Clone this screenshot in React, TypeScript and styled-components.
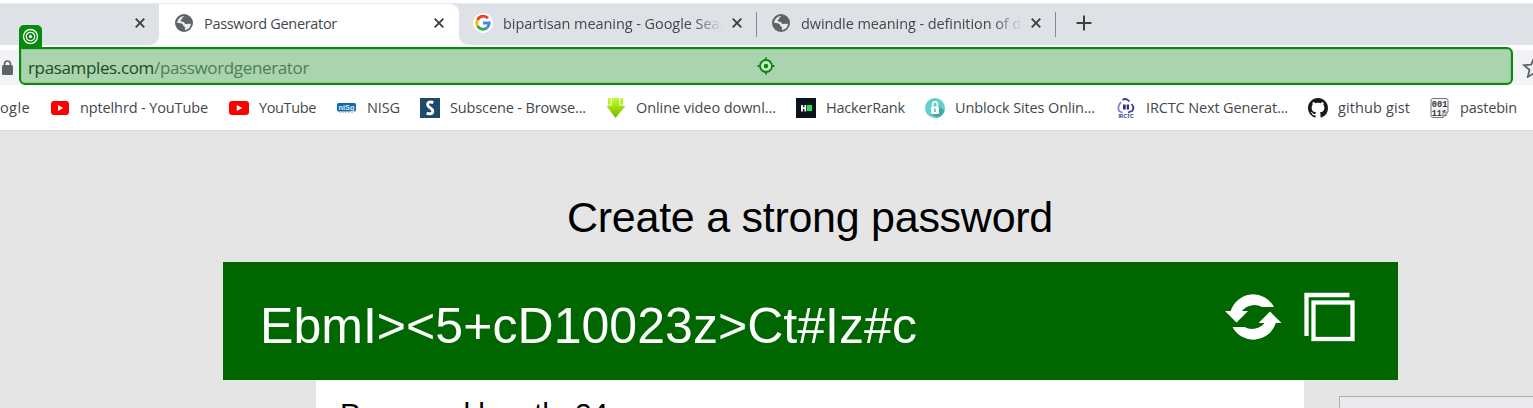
import React, { useLayoutEffect, useRef } from 'react';
import styled, { createGlobalStyle } from 'styled-components';

const Global = createGlobalStyle`
  * { box-sizing: border-box; }
  body { margin: 0; overflow: hidden; background: #e5e5e5; }
`;
const Screen = styled.div`
  width: 1533px; height: 408px; overflow: hidden; display: flex; flex-direction: column;
  background: #fff; font-family: "Open Sans", "Noto Sans", sans-serif; color: #44474b;
`;
const TabStrip = styled.div`
  height: 42px; margin-top: 3px; flex: none; display: flex; background: #dee1e6; border-top: 1px solid #e6e8ec;
`;
const PrevTab = styled.div`
  width: 159px; padding: 12px 14px 0 0; display: flex; justify-content: flex-end; align-items: flex-start;
  background: #dee1e6; border-bottom-right-radius: 9px;
`;
const TabBacking = styled.div`display: flex; background: #fff; border-radius: 0 9px 0 0; width: 459px;`;
const ActiveTab = styled.div`
  flex: 1; display: flex; padding: 10px 14px 0 16px; background: #fff; border-radius: 9px 9px 0 0;
`;
const RestTabs = styled.div`flex: 1; background: #fff; display: flex;`;
const RestInner = styled.div`flex: 1; background: #dee1e6; border-bottom-left-radius: 9px; padding: 10px 0 0 14px; display: flex;`;
const IconBox = styled.span<{ $w: number; $gap?: number; $top?: number }>`
  width: ${p => p.$w}px; margin-right: ${p => p.$gap ?? 0}px; margin-top: ${p => p.$top ?? 0}px;
  flex: none; display: flex; align-self: flex-start;
  svg { display: block; overflow: visible; }
`;
const LabelBox = styled.span<{ $w: number; $size: number; $clip?: number; $color?: string }>`
  display: block; flex: none; width: ${p => p.$clip ?? p.$w}px; white-space: pre; overflow: ${p => (p.$clip ? 'hidden' : 'visible')};
  font-size: ${p => p.$size}px; line-height: 20px; color: ${p => p.$color ?? 'inherit'};
  ${p => p.$clip ? 'mask-image: linear-gradient(to right, #000 calc(100% - 28px), transparent);' : ''}
`;
const Spacer = styled.span<{ $w: number }>`width: ${p => p.$w}px; flex: none;`;
const Divider = styled.span`width: 1px; height: 25px; margin-top: -2px; background: #85888c; flex: none;`;

const AddressRow = styled.div`height: 42px; flex: none; display: flex; padding-top: 2px; position: relative;`;
const LockArea = styled.div`width: 19px; height: 35px; margin-top: 3px; padding: 9px 0 0 2px; background: #f1f3f4; flex: none;`;
const Address = styled.div`
  width: 1494px; height: 38px; flex: none; display: flex; padding: 9px 0 0 7px;
  background: #a9d4ad; border: 2px solid #078a0e; border-radius: 0 6px 6px 6px;
  box-shadow: inset 0 0 0 1px #93c598;
`;
const StarArea = styled.div`flex: 1; height: 35px; margin-top: 3px; background: #f1f3f4; padding: 6px 0 0 9px; overflow: hidden;`;
const TargetTag = styled.div`
  position: absolute; left: 19px; top: -20px; width: 23px; height: 24px; padding: 3px;
  background: #078a0e; border-radius: 5px 5px 0 0;
`;
const Bookmarks = styled.div`height: 43px; flex: none; display: flex; padding-top: 11px; overflow: hidden;`;
const Page = styled.main`
  flex: 1; background: #e5e5e5; border-top: 1px solid #d8d8d8; display: flex; flex-direction: column;
  font-family: "Liberation Sans", Arial, sans-serif; overflow: hidden;
`;
const Title = styled.h1`
  margin: 62px 0 0 567px; height: 69px; flex: none; font-weight: 400; font-size: 43px; line-height: 48px; color: #000; white-space: nowrap;
`;
const PasswordBar = styled.section`
  width: 1175px; height: 118px; flex: none; margin-left: 223px; background: #060; color: #fff;
  display: flex; padding-left: 37px;
`;
const Password = styled.div`width: 965px; padding-top: 35px; font-size: 50px; line-height: 58px; white-space: nowrap;`;
const Lower = styled.div`display: flex; flex: none; padding-left: 316px;`;
const Options = styled.div`width: 988px; flex: none; height: 60px; background: #fff; padding: 17px 0 0 24px; font-size: 30px; line-height: 34px; color: #000;`;
const Side = styled.div`width: 220px; flex: none; height: 44px; margin: 16px 0 0 35px; background: #eaeaec; border: 1px solid #b0b0b0;`;

function Fit({ text, w, rest, restColor }: { text: string; w: number; rest?: string; restColor?: string }) {
  const ref = useRef<HTMLSpanElement>(null);
  useLayoutEffect(() => {
    const el = ref.current;
    if (!el) return;
    el.style.letterSpacing = '0px';
    const natural = el.getBoundingClientRect().width;
    el.style.letterSpacing = `${(w - natural) / (text + (rest ?? '')).length}px`;
  }, [text, rest, w]);
  return <span ref={ref}>{text}{rest && <span style={{ color: restColor }}>{rest}</span>}</span>;
}
function Label({ text, w, clip, size = 14.5 }: { text: string; w: number; clip?: number; size?: number }) {
  return <LabelBox $w={w} $clip={clip} $size={size}><Fit text={text} w={w} /></LabelBox>;
}

const Close = () => (
  <svg width="10" height="14" viewBox="0 0 10 14"><path d="M.7 2.7l8.6 8.6M9.3 2.7L.7 11.3" stroke="#3c4043" strokeWidth="1.9" /></svg>
);
const Globe = () => (
  <svg width="18" height="18" viewBox="0 0 18 18">
    <circle cx="9" cy="9" r="9" fill="#5f6368" />
    <path d="M10.500 2.100c-.3 1-1.600.6-2 1.400-.3.700.2 1.200-.5 1.700-.7.500-1.500.3-1.600 1.100 0 .9 1.300.5 2.200.7 1.400.3 1.200 1.900 2.400 2.100 1 .1 1.500-.5 2.400-.3.900.2 1.300.9 2.400.8A7 7 0 0 0 10.500 2.100z" fill="#5f6368" />
    <path d="M9.800 1.900c-.6 1-2 .9-2.200 1.900-.1.600.2 1-.4 1.500-.6.400-1.400.3-1.400 1.300 0 .8.900.9 1.900.8 1.300 0 1.700.8 2 1.600.4 1 1.700.9 2.500.7 1.200-.3 2.300.3 3.700-.1.100 3.300-2.600 6.200-6 6.500-.3-.8.400-1.600.2-2.500-.2-1-1.400-1-1.700-1.900-.3-1.100-.6-1.900-2.100-2.300-1.400-.3-2.900-.2-4.200-.3.100-3.900 3.400-7.300 7.700-7.200z" fill="#e8eaed" />
    <path d="M9.800 1.900c-.6 1-2 .9-2.200 1.900-.1.600.2 1-.4 1.500-.6.400-1.400.3-1.400 1.300 0 .8.900.9 1.900.8 1.300 0 1.700.8 2 1.600.4 1 1.700.9 2.500.7 1.200-.3 2.300.3 3.700-.1A7 7 0 0 0 9.800 1.900z" fill="#5f6368" />
  </svg>
);
const Google = () => (
  <svg width="20" height="20" viewBox="0 0 20 20">
    <circle cx="10" cy="10" r="10" fill="#fff" />
    <g fill="none" strokeWidth="2.9">
      <path d="M15 5.300A6.300 6.300 0 0 0 4.500 7" stroke="#ea4335" />
      <path d="M4.500 7a6.300 6.300 0 0 0 0 6" stroke="#fbbc05" />
      <path d="M4.500 13a6.300 6.300 0 0 0 9.500 1.900" stroke="#34a853" />
      <path d="M14 14.900A6.300 6.300 0 0 0 16.200 10H10" stroke="#4285f4" />
    </g>
  </svg>
);
const YouTube = ({ w = 18 }: { w?: number }) => (
  <svg width={w} height="14" viewBox="0 0 18 14" preserveAspectRatio="none"><rect width="18" height="14" rx="3" fill="#f00" /><path d="M7 4l5 3-5 3z" fill="#fff" /></svg>
);
const Nisg = () => (
  <svg width="19" height="14" viewBox="0 0 19 14"><rect y="2" width="19" height="8.500" rx="1.500" fill="#1467a8" /><text x="1.500" y="8.700" fontFamily="Liberation Sans" fontWeight="700" fontSize="8" textLength="16" lengthAdjust="spacingAndGlyphs" fill="#dcefff">niSg</text><path d="M2 11.500h15" stroke="#c9cdd2" strokeDasharray="2 1" /></svg>
);
const Subscene = () => (
  <svg width="20" height="20" viewBox="0 0 20 20"><rect width="20" height="20" fill="#1d4a68" /><path d="M13.300 4.600C10.500 3.400 7.600 4 7.600 6.500c0 3.300 5.200 3.200 5.200 6.700 0 2.600-3 3.200-6.200 1.900" fill="none" stroke="#fff" strokeWidth="2.900" /></svg>
);
const Download = () => (
  <svg width="20" height="20" viewBox="0 0 20 20">
    <defs><linearGradient id="dl" x2="0" y2="1"><stop stopColor="#c5ff20" /><stop offset="1" stopColor="#76b900" /></linearGradient></defs>
    <path d="M2 0h3v5.500h1V0h7v5.500h1V0h3v8h2.500L9.500 20 .5 8H2z" fill="url(#dl)" />
    <path d="M5.200 0v7H2M13.800 0v7H17" fill="none" stroke="#f4ffdc" strokeWidth="1.200" />
  </svg>
);
const HackerRank = () => (
  <svg width="20" height="20" viewBox="0 0 20 20"><rect width="20" height="20" fill="#0b141e" /><path d="M6 7v6.500M9.300 7v6.500M6 10.200h3.500" stroke="#fff" strokeWidth="1.800" /><rect x="11" y="7" width="5" height="6" fill="#1ee35b" /></svg>
);
const Unblock = () => (
  <svg width="20" height="20" viewBox="0 0 20 20">
    <circle cx="10" cy="10" r="10" fill="#62d0ca" /><path d="M14 8l5.500 5A10 10 0 0 1 12 19.800L6 16z" fill="#45aaa5" />
    <rect x="6" y="8.500" width="8" height="7.500" rx="1" fill="#fff" /><path d="M7.700 8.500V6a2.300 2.300 0 0 1 4.600 0v2.500" fill="none" stroke="#fff" strokeWidth="1.600" /><path d="M10 10.500v3.500" stroke="#4bb9b3" strokeWidth="1.500" />
  </svg>
);
const Irctc = () => (
  <svg width="18" height="20" viewBox="0 0 18 20">
    <g fill="none" stroke="#3a3c9c" strokeWidth="1.800"><path d="M5.500 2Q9-.5 12.500 3.500" /><path d="M4 4Q0 9 2 13l3.500 1.800" stroke="#8184c6" /><path d="M14.500 6q3.500 4 .5 7l-4 1.500" /></g>
    <path d="M6 6.500h2.700v5H6zM9.700 6.500H12v5H9.700z" fill="#292c91" />
    <text x="1.500" y="19.800" fontSize="4.500" fontWeight="700" fontFamily="Liberation Sans" textLength="15" lengthAdjust="spacingAndGlyphs" fill="#292c91">IRCTC</text>
  </svg>
);
const Github = () => (
  <svg width="20" height="20" viewBox="0 0 16 16"><path fill="#191717" d="M8 0C3.580 0 0 3.580 0 8c0 3.540 2.290 6.530 5.470 7.590.4.070.55-.17.55-.38 0-.19-.01-.82-.01-1.490-2.010.37-2.530-.49-2.690-.94-.09-.23-.48-.94-.82-1.130-.28-.15-.68-.52-.01-.53.63-.01 1.080.58 1.230.82.72 1.210 1.870.87 2.330.66.07-.52.28-.87.51-1.070-1.780-.2-3.640-.89-3.640-3.950 0-.87.31-1.590.82-2.150-.08-.2-.36-1.020.08-2.120 0 0 .67-.21 2.200.82.64-.18 1.320-.27 2-.27s1.360.09 2 .27c1.530-1.040 2.200-.82 2.200-.82.44 1.100.16 1.920.08 2.120.51.56.82 1.270.82 2.150 0 3.070-1.870 3.750-3.650 3.950.29.25.54.73.54 1.480 0 1.070-.01 1.930-.01 2.200 0 .21.15.46.55.38A8.013 8.013 0 0 0 16 8c0-4.420-3.580-8-8-8z" /></svg>
);
const Pastebin = () => (
  <svg width="19" height="20" viewBox="0 0 19 20">
    <path d="M3 .5h13q2 0 2 2V14l-5 5.500H3q-2 0-2-2V2.500q0-2 2-2z" fill="#f3f3f4" stroke="#74777c" />
    <g fontFamily="Liberation Mono" fontWeight="700" fontSize="9.500" fill="#333"><text x="1.800" y="9" textLength="15.500" lengthAdjust="spacingAndGlyphs">001</text><text x="1.800" y="17.500" textLength="15" lengthAdjust="spacingAndGlyphs">111</text></g>
    <path d="M18 14l-5 5.500V14.500z" fill="#cfd1d5" stroke="#8d9096" />
  </svg>
);
const Bulls = () => (
  <svg width="17" height="17" viewBox="0 0 17 17" style={{ display: 'block' }}><g fill="none" stroke="#fff" strokeWidth="1.300"><circle cx="8.500" cy="8.500" r="7" /><circle cx="8.500" cy="8.500" r="4.200" /></g><circle cx="8.500" cy="8.500" r="1.600" fill="#fff" /></svg>
);
const Crosshair = () => (
  <svg width="18" height="18" viewBox="0 0 18 18"><g fill="none" stroke="#078a0e" strokeWidth="1.800"><circle cx="9" cy="9" r="6" fill="#c5e5c7" /><path d="M9 .5v3M9 14.500v3M.5 9h3M14.500 9h3" /></g><circle cx="9" cy="9" r="2.200" fill="#078a0e" /></svg>
);

const bookmarks: { icon: React.ReactNode; w: number; gap: number; top?: number; text: string; textW: number; after: number }[] = [
  { icon: <YouTube />, w: 18, gap: 11, top: 3, text: 'nptelhrd - YouTube', textW: 128, after: 21 },
  { icon: <YouTube w={20} />, w: 20, gap: 10, top: 3, text: 'YouTube', textW: 57, after: 21 },
  { icon: <Nisg />, w: 19, gap: 11, top: 3, text: 'NISG', textW: 33, after: 20 },
  { icon: <Subscene />, w: 20, gap: 10, text: 'Subscene - Browse...', textW: 136, after: 20 },
  { icon: <Download />, w: 20, gap: 10, text: 'Online video downl...', textW: 140, after: 20 },
  { icon: <HackerRank />, w: 20, gap: 10, text: 'HackerRank', textW: 79, after: 20 },
  { icon: <Unblock />, w: 20, gap: 10, text: 'Unblock Sites Onlin...', textW: 140, after: 22 },
  { icon: <Irctc />, w: 18, gap: 11, text: 'IRCTC Next Generat...', textW: 142, after: 20 },
  { icon: <Github />, w: 20, gap: 10, text: 'github gist', textW: 72, after: 20 },
  { icon: <Pastebin />, w: 19, gap: 11, text: 'pastebin', textW: 57, after: 10 },
];

const arrow = 'M5.700 49A23.500 23.500 0 0 1 49 45H37A15 13.500 0 0 0 17 49H23L11.500 60.500 0 49z';

export default function App() {
  return (
    <Screen>
      <Global />
      <TabStrip>
        <TabBacking>
          <PrevTab><Close /></PrevTab>
          <ActiveTab>
            <IconBox $w={18} $gap={11}><Globe /></IconBox>
            <Label text="Password Generator" w={133} />
            <Spacer $w={97} />
            <IconBox $w={10} $top={2}><Close /></IconBox>
          </ActiveTab>
        </TabBacking>
        <RestTabs>
          <RestInner>
            <IconBox $w={20} $gap={10} $top={-1}><Google /></IconBox>
            <Label text="bipartisan meaning - Google Search" w={238} clip={219} />
            <Spacer $w={10} />
            <IconBox $w={10} $gap={14} $top={2}><Close /></IconBox>
            <Divider />
            <Spacer $w={15} />
            <IconBox $w={18} $gap={11}><Globe /></IconBox>
            <Label text="dwindle meaning - definition of dwindle" w={264} clip={221} />
            <Spacer $w={9} />
            <IconBox $w={10} $gap={14} $top={2}><Close /></IconBox>
            <Divider />
            <Spacer $w={20} />
            <IconBox $w={16} $top={1}>
              <svg width="16" height="16" viewBox="0 0 16 16"><path d="M8 .5v15M.5 8h15" stroke="#3c4043" strokeWidth="2" /></svg>
            </IconBox>
          </RestInner>
        </RestTabs>
      </TabStrip>
      <AddressRow>
        <LockArea>
          <svg width="11" height="16" viewBox="0 0 11 16"><rect y="5" width="11" height="10" rx="1.500" fill="#5f6368" /><path d="M2.500 6V4a3 3 0 0 1 6 0v2" fill="none" stroke="#5f6368" strokeWidth="1.600" /></svg>
        </LockArea>
        <Address>
          <LabelBox $w={281} $size={17} $color="#1f4a24"><Fit text="rpasamples.com" rest="/passwordgenerator" restColor="#4d8053" w={281} /></LabelBox>
          <Spacer $w={448} />
          <IconBox $w={18} $top={-1}><Crosshair /></IconBox>
        </Address>
        <StarArea>
          <svg width="24" height="22" viewBox="0 0 24 22"><path d="M12 2l2.800 6.600 7.200.6-5.500 4.700 1.700 7-6.200-3.700-6.200 3.700 1.700-7L2 9.200l7.200-.6z" fill="none" stroke="#5f6368" strokeWidth="1.800" /></svg>
        </StarArea>
        <TargetTag><Bulls /></TargetTag>
      </AddressRow>
      <Bookmarks>
        <Label text="ogle" w={30} />
        <Spacer $w={21} />
        {bookmarks.map(b => (
          <React.Fragment key={b.text}>
            <IconBox $w={b.w} $gap={b.gap} $top={b.top}>{b.icon}</IconBox>
            <Label text={b.text} w={b.textW} />
            <Spacer $w={b.after} />
          </React.Fragment>
        ))}
      </Bookmarks>
      <Page>
        <Title><Fit text="Create a strong password" w={486} /></Title>
        <PasswordBar>
          <Password><Fit text="EbmI&gt;&lt;5+cD10023z&gt;Ct#Iz#c" w={657} /></Password>
          <svg width="134" height="84" viewBox="0 0 134 84">
            <g fill="#fff"><path d={arrow} /><path d={arrow} transform="rotate(180 28.250 55)" /></g>
            <g fill="none" stroke="#fff" strokeWidth="4.300"><path d="M124.500 33H81.500V74" /><rect x="88.500" y="40.500" width="39" height="36.500" /></g>
          </svg>
        </PasswordBar>
        <Lower>
          <Options><Fit text="Password length: 24" w={268} /></Options>
          <Side />
        </Lower>
      </Page>
    </Screen>
  );
}
